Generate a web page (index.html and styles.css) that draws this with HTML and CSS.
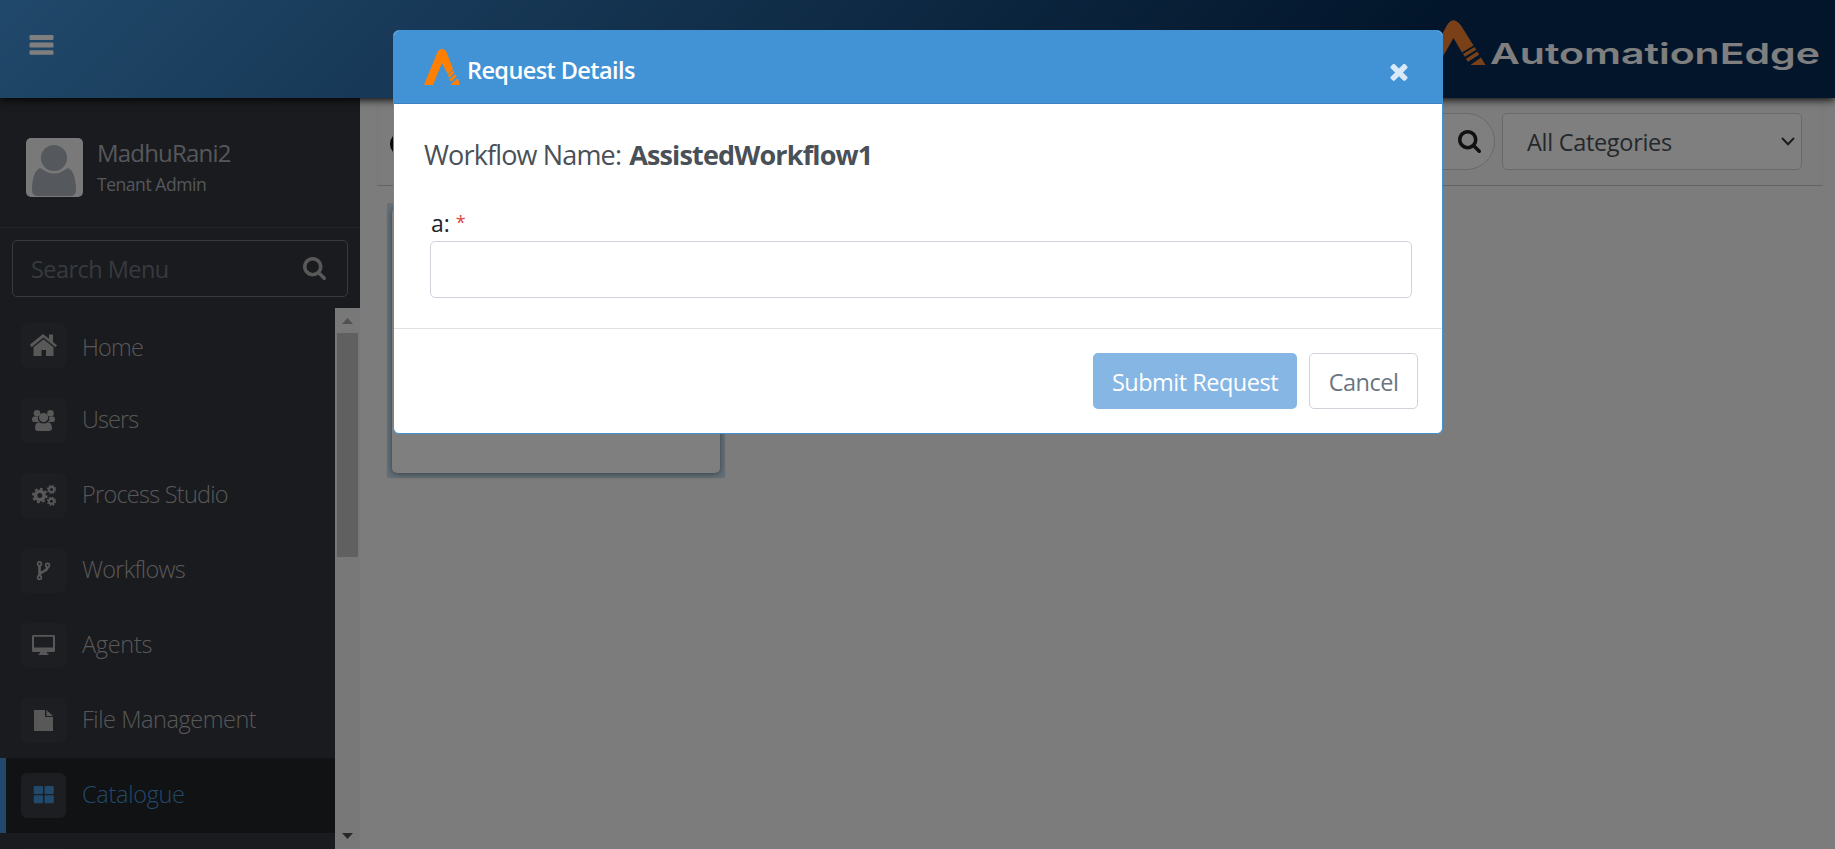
FILE: index.html
```
<!DOCTYPE html>
<html lang="en">
<head>
<meta charset="utf-8">
<title>AutomationEdge</title>
<link rel="stylesheet" href="styles.css">
</head>
<body>
<header class="topbar">
  <svg class="bars" viewBox="0 0 24 20"><rect width="24" height="5" rx="1.2"/><rect y="7.6" width="24" height="5" rx="1.2"/><rect y="15.2" width="24" height="4.6" rx="1.2"/></svg>
  <div class="brand">
    <svg class="brand-mark" viewBox="0 0 58 46"><path d="M-1 45 19 7Q26-6.500 35 7L46.500 25.500 35 32.500 26.500 18 11 45Z"/><path d="M36 34 47.500 27 49.300 29.800 37.800 36.800ZM39 38.800 50.300 31.600 52.300 34.600 41 41.800ZM43.500 45 54 37.500 58.500 45Z"/></svg>
    <svg class="brand-name" viewBox="0 0 330 50"><text x="0" y="35" textLength="330" lengthAdjust="spacingAndGlyphs">AutomationEdge</text></svg>
  </div>
</header>
<div class="shell">
  <aside class="sidebar">
    <div class="profile">
      <svg class="avatar" viewBox="0 0 57 59"><rect width="57" height="59" rx="5" fill="#f2f2f2"/><path d="M14 30Q28 39 42 30C48 32 50 43 50 52Q50 58 44 58H12Q6 58 6 52C6 43 8 32 14 30Z" fill="#abb1b8"/><circle cx="28" cy="20" r="14.300" fill="#abb1b8" stroke="#f2f2f2" stroke-width="2.400"/></svg>
      <div class="who"><div class="who-name">MadhuRani2</div><div class="who-role">Tenant Admin</div></div>
    </div>
    <div class="search-wrap"><div class="search"><span class="search-label">Search Menu</span>
      <svg class="lens" viewBox="64 128 1664 1664"><path d="M1216 832q0-185-131.500-316.500t-316.500-131.500-316.500 131.500-131.500 316.500 131.500 316.500 316.500 131.500 316.500-131.500 131.500-316.500zm512 832q0 52-38 90t-90 38q-54 0-90-38l-343-342q-179 124-399 124-143 0-273.500-55.500t-225-150-150-225-55.500-273.500 55.500-273.500 150-225 225-150 273.500-55.500 273.500 55.500 225 150 150 225 55.500 273.500q0 220-124 399l343 343q37 37 37 90z"/></svg></div></div>
    <div class="menu">
      <nav class="items">
        <div class="item home"><span class="tile"><svg viewBox="0 0 45 45"><path d="M9 21.500 22 11 28 15.800V11.500H32V19L36 22.200 34.500 24.200 22.500 14.500 10.500 24.200Z"/><path d="M12.500 24.300 22.500 16.200 32.500 24.300V33H25V27H20.500V33H12.500Z"/></svg></span><span class="label l-home">Home</span></div>
        <div class="item"><span class="tile"><svg viewBox="0 0 45 45"><circle cx="16" cy="15.300" r="3.300"/><circle cx="29.500" cy="15.300" r="3.300"/><path d="M13.200 18.500H17Q16.500 22 18.500 24H13.500Q11 24 11 21.500 11 18.500 13.200 18.500ZM32 18.500H28.300Q29 22 27 24H31.500Q34 24 34 21.500 34 18.500 32 18.500Z"/><circle cx="22.600" cy="19.600" r="4.600"/><path d="M18 24.200Q22.500 27 27 24.200C30 24.500 31 27.500 31 30Q31 33 28 33H17Q14 33 14 30C14 27.500 15 24.500 18 24.200Z"/></svg></span><span class="label l-users">Users</span></div>
        <div class="item"><span class="tile"><svg viewBox="0 0 45 45"><g fill="none" stroke="currentColor"><circle cx="18.800" cy="22.500" r="4.300" stroke-width="3.600"/><circle cx="18.800" cy="22.500" r="6.800" stroke-width="2" stroke-dasharray="2.700 2.640"/><circle cx="30.500" cy="16.500" r="2.500" stroke-width="1.900"/><circle cx="30.500" cy="16.500" r="3.900" stroke-width="1.400" stroke-dasharray="1.700 1.360"/><circle cx="30.500" cy="28.300" r="2.500" stroke-width="1.900"/><circle cx="30.500" cy="28.300" r="3.900" stroke-width="1.400" stroke-dasharray="1.700 1.360"/></g></svg></span><span class="label l-process">Process Studio</span></div>
        <div class="item"><span class="tile"><svg viewBox="0 0 45 45"><g fill="none" stroke="currentColor"><path d="M18.500 17.500V28M26.500 19C26.500 24 20 22.500 18.700 26.500" stroke-width="2.600"/><g stroke-width="1.600"><circle cx="18.500" cy="15.800" r="1.900"/><circle cx="26.500" cy="17.300" r="1.900"/><circle cx="18.500" cy="29.500" r="1.900"/></g></g></svg></span><span class="label l-workflows">Workflows</span></div>
        <div class="item"><span class="tile"><svg viewBox="0 0 45 45"><path fill-rule="evenodd" d="M12.500 12H32.500Q34 12 34 13.500V27.500Q34 29 32.500 29H26V30.500H27.500V32H17.500V30.500H19V29H12.500Q11 29 11 27.500V13.500Q11 12 12.500 12ZM13 13.800V24.500H32V13.800Z"/></svg></span><span class="label l-agents">Agents</span></div>
        <div class="item"><span class="tile"><svg viewBox="0 0 45 45"><path d="M13 12H24V19H32V33H13ZM25.500 12 32 18H25.500Z"/></svg></span><span class="label l-files">File Management</span></div>
        <div class="item active"><span class="tile"><svg viewBox="0 0 45 45"><rect x="12.700" y="13" width="9.300" height="8" rx="1.300"/><rect x="23.500" y="13" width="9.300" height="8" rx="1.300"/><rect x="12.700" y="22.200" width="9.300" height="8" rx="1.300"/><rect x="23.500" y="22.200" width="9.300" height="8" rx="1.300"/></svg></span><span class="label l-catalogue">Catalogue</span></div>
        <div class="item"><span class="tile"></span></div>
      </nav>
      <div class="scroll"><svg class="arrow up" viewBox="0 0 11 6"><path d="M0 6 5.500 0 11 6Z"/></svg><div class="thumb"></div><svg class="arrow down" viewBox="0 0 11 6"><path d="M0 0 5.500 6 11 0Z"/></svg></div>
    </div>
  </aside>
  <main class="main">
    <div class="toolbar">
      <svg class="page-dot" viewBox="0 0 20 22"><ellipse cx="10" cy="11" rx="10" ry="11"/></svg>
      <div class="filter"><svg class="lens" viewBox="64 128 1664 1664"><path d="M1216 832q0-185-131.500-316.500t-316.500-131.500-316.500 131.500-131.500 316.500 131.500 316.500 316.500 131.500 316.500-131.500 131.500-316.500zm512 832q0 52-38 90t-90 38q-54 0-90-38l-343-342q-179 124-399 124-143 0-273.500-55.500t-225-150-150-225-55.500-273.500 55.500-273.500 150-225 225-150 273.500-55.500 273.500 55.500 225 150 150 225 55.500 273.500q0 220-124 399l343 343q37 37 37 90z"/></svg></div>
      <div class="select"><span class="select-label">All Categories</span><svg class="chevron" viewBox="0 0 14 9"><path d="M1 1 7 7.300 13 1"/></svg></div>
    </div>
    <div class="card-focus"><div class="card"></div></div>
  </main>
</div>
<div class="backdrop">
  <section class="modal">
    <div class="modal-head">
      <svg class="mark" viewBox="0 0 36 36"><path d="M0 36 13.500 3Q15 0 18 0T22.500 3L29 20 24 25.500 18 14 9 36Z"/><path d="M24 26.300 29.300 21 30.500 23.500 25 29ZM25.600 30.200 31.300 25 32.500 27.500 27 33ZM28 34.200 33.700 29.200 36 36H27Z"/></svg>
      <h2 class="modal-title">Request Details</h2>
      <svg class="close" viewBox="302 238 1188 1316"><path d="M1490 1322q0 40-28 68l-136 136q-28 28-68 28t-68-28l-294-294-294 294q-28 28-68 28t-68-28l-136-136q-28-28-28-68t28-68l294-294-294-294q-28-28-28-68t28-68l136-136q28-28 68-28t68 28l294 294 294-294q28-28 68-28t68 28l136 136q28 28 28 68t-28 68l-294 294 294 294q28 28 28 68z"/></svg>
    </div>
    <div class="modal-body">
      <p class="wf"><span class="wf-key">Workflow Name:</span><strong class="wf-name">AssistedWorkflow1</strong></p>
      <label class="field-label">a:<span class="req">*</span></label>
      <div class="field"></div>
    </div>
    <div class="modal-foot"><div class="btn submit"><span>Submit Request</span></div><div class="btn cancel"><span>Cancel</span></div></div>
  </section>
</div>
</body>
</html>
```
FILE: styles.css
```
* { box-sizing: border-box; }
body { margin: 0; height: 849px; overflow: hidden; background: #f8f8f8; font-family: "Open Sans", "Noto Sans", sans-serif; font-size: 23.5px; }
h1, h2, p { margin: 0; font-weight: 400; }
svg { display: block; flex: none; }
span, div, h2, strong { white-space: nowrap; }
.topbar { position: relative; height: 98px; display: flex; justify-content: space-between; padding: 0 15px 0 29px; background: linear-gradient(135deg, #4292d6 0%, #042a54 76%); box-shadow: 0 2px 8px rgba(0,0,0,.9); }
.bars { width: 25px; height: 20px; margin-top: 35px; fill: #fff; }
.brand { display: flex; gap: 5px; }
.brand-mark { width: 58px; height: 46px; margin-top: 20px; fill: #f58232; overflow: visible; }
.brand-name { width: 330px; height: 50px; margin-top: 29px; overflow: visible; }
.brand-name text { font-family: "Inter", sans-serif; font-size: 29px; font-weight: 600; fill: #fff; }
.shell { display: flex; height: 751px; }
.sidebar { width: 360px; background: #34363c; display: flex; flex-direction: column; }
.profile { height: 130px; display: flex; padding: 40px 0 0 26px; gap: 14px; border-bottom: 1px solid #43464c; }
.avatar { width: 57px; height: 59px; }
.who { color: #abafb8; }
.who-name { font-size: 24px; line-height: 30px; letter-spacing: -.8px; }
.who-role { font-size: 17.5px; line-height: 24px; margin-top: 4px; letter-spacing: -.45px; }
.search-wrap { height: 80px; padding: 12px; }
.search { height: 57px; border: 1px solid #6f747b; border-radius: 5px; display: flex; align-items: center; justify-content: space-between; padding: 0 21px 0 18px; color: #6c757d; letter-spacing: -.55px; }
.lens { width: 23px; height: 23px; fill: #b0b0b0; }
.menu { flex: 1; display: flex; min-height: 0; overflow: hidden; }
.items { width: 335px; }
.item { height: 75px; display: flex; align-items: center; padding-left: 21px; gap: 16px; color: #b0b0b0; }
.tile { width: 45px; height: 45px; border-radius: 6px; background: #3b3c44; }
.tile svg { width: 45px; height: 45px; fill: currentColor; }
.label { line-height: 30px; padding-bottom: 3px; font-weight: 300; }
.home .label { padding: 3px 0 0; }
.l-home { letter-spacing: -.8px; }
.l-users { letter-spacing: -.9px; }
.l-process { letter-spacing: -.75px; }
.l-workflows { letter-spacing: -.7px; }
.l-agents { letter-spacing: -.3px; }
.l-files { letter-spacing: -.45px; }
.l-catalogue { letter-spacing: -.3px; }
.active { background: #222427; color: #4292d6; border-left: 6px solid #4292d6; padding-left: 15px; }
.scroll { width: 25px; background: #f1f1f1; display: flex; flex-direction: column; align-items: center; padding: 10px 0; }
.arrow { width: 11px; height: 6px; fill: #a3a3a3; }
.down { margin-top: auto; fill: #505050; }
.thumb { width: 21px; height: 224px; margin-top: 9px; background: #c1c1c1; }
.main { flex: 1; padding-left: 17px; }
.toolbar { width: 1446px; height: 88px; display: flex; align-items: flex-start; justify-content: flex-end; padding: 14px 20px 0 12px; border: 1px solid #f0f0f0; border-bottom-color: #c6c9cb; }
.page-dot { width: 20px; height: 22px; margin: 20px auto 0 0; fill: #111; }
.filter { width: 600px; height: 57px; border: 1px solid #ced4da; border-radius: 29px; background: #fff; display: flex; align-items: center; justify-content: flex-end; padding-right: 13px; }
.filter .lens { fill: #222; }
.select { width: 300px; height: 57px; margin-left: 7px; border: 1px solid #ced4da; border-radius: 5px; background: #fff; display: flex; align-items: center; justify-content: space-between; padding: 0 6px 0 24px; color: #495057; letter-spacing: -.3px; }
.chevron { width: 14px; height: 9px; fill: none; stroke: #343a40; stroke-width: 2; }
.card-focus { width: 338px; height: 275px; margin: 17px 0 0 10px; padding: 5px; background: #c9dff0; }
.card { height: 265px; background: #fff; border-radius: 5px; box-shadow: 0 1px 6px rgba(0,0,0,.45); }
.backdrop { position: absolute; inset: 0; background: rgba(0,0,0,.5); padding: 30px 0 0 393px; }
.modal { width: 1050px; height: 404px; border: 1px solid #4292d6; border-radius: 6px; background: #fff; overflow: hidden; }
.modal-head { height: 73px; display: flex; background: #4292d6; border-bottom: 1px solid #3a82c0; padding: 18px 34px 0 30px; }
.mark { width: 36px; height: 36px; fill: #ff8000; }
.modal-title { margin-left: 7px; padding-top: 6px; font-size: 23.5px; line-height: 30px; font-weight: 600; color: #fff; letter-spacing: -.6px; }
.close { width: 18px; height: 19px; margin: 13px 0 0 auto; fill: #d9e9f7; }
.modal-body { height: 224px; padding: 32px 30px 0 30px; }
.wf { display: flex; gap: 8px; color: #495057; font-size: 27px; line-height: 38px; letter-spacing: -.85px; }
.wf strong { font-weight: 700; }
.field-label { display: flex; gap: 6px; padding-left: 7px; margin-top: 34px; height: 30px; line-height: 31px; font-size: 23px; color: #212529; }
.req { color: #dc4545; font-size: 18px; line-height: 29px; }
.field { height: 57px; margin: 3px 0 0 6px; border: 1px solid #ced4da; border-radius: 5px; }
.modal-foot { height: 106px; border-top: 1px solid #dee2e6; padding: 24px 24px 0; display: flex; justify-content: flex-end; gap: 12px; }
.btn { height: 56px; border-radius: 5px; display: flex; align-items: center; justify-content: center; padding-top: 1px; letter-spacing: -.5px; }
.submit { width: 204px; background: #85b6e4; color: #fff; }
.cancel { width: 109px; border: 1px solid #ced4da; color: #6c757d; }
```
